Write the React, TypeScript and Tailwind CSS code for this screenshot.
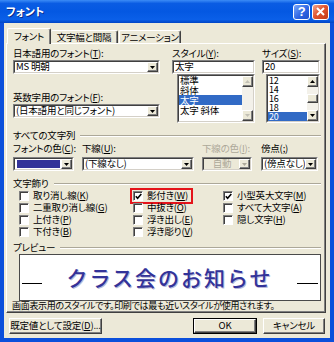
import React from 'react';

const sunken = 'border border-t-[#808080] border-l-[#808080] border-b-white border-r-white';
const sunkenInner = 'border border-t-[#404040] border-l-[#404040] border-b-[#d4d0c8] border-r-[#d4d0c8]';
const raised = 'border border-t-white border-l-white border-b-[#404040] border-r-[#404040] shadow-[inset_-1px_-1px_0_#808080]';

const Tri = ({ up = false, color = '#000' }: { up?: boolean; color?: string }) => (
  <svg width="5" height="3" viewBox="0 0 5 3">
    <path d={up ? 'M0 3h5L2.5 0z' : 'M0 0h5L2.5 3z'} fill={color} />
  </svg>
);

const DropBtn = ({ disabled }: { disabled?: boolean }) => (
  <div className={`w-[11px] h-full shrink-0 flex items-center justify-center bg-[#ECE9D8] ${raised}`}>
    <Tri color={disabled ? '#aca899' : '#000'} />
  </div>
);

const Combo: React.FC<{ className?: string; disabled?: boolean; children?: React.ReactNode }> = ({ className = '', disabled, children }) => (
  <div className={`h-[14px] ${sunken} ${className}`}>
    <div className={`h-full flex ${sunkenInner} ${disabled ? 'bg-[#ECE9D8]' : 'bg-white'}`}>
      <div className="flex-1 min-w-0 flex items-center pl-[1px] leading-none overflow-hidden whitespace-nowrap">{children}</div>
      <DropBtn disabled={disabled} />
    </div>
  </div>
);

const TextBox: React.FC<{ children?: React.ReactNode }> = ({ children }) => (
  <div className={`h-[14px] ${sunken}`}>
    <div className={`h-full flex items-center pl-[1px] leading-none bg-white ${sunkenInner}`}>{children}</div>
  </div>
);

const ArrowBtn = ({ up, disabled }: { up?: boolean; disabled?: boolean }) => (
  <div className={`h-[11px] shrink-0 flex items-center justify-center bg-[#ECE9D8] ${raised}`}>
    <Tri up={up} color={disabled ? '#c2c0b5' : '#000'} />
  </div>
);

const ScrollBar = ({ enabled }: { enabled?: boolean }) => (
  <div className="w-[11px] shrink-0 flex flex-col bg-[#f3f1ea]">
    <ArrowBtn up disabled={!enabled} />
    <div className="flex-1 flex flex-col justify-center">
      {enabled && <div className={`h-[9px] bg-[#ECE9D8] ${raised}`} />}
    </div>
    <ArrowBtn disabled={!enabled} />
  </div>
);

const ListBox: React.FC<{ className?: string; items: string[]; selected: string; enabled?: boolean; itemClass: string; first?: string }> = ({
  className = '',
  items,
  selected,
  enabled,
  itemClass,
  first = '',
}) => (
  <div className={`h-[49px] ${sunken} ${className}`}>
    <div className={`h-full flex bg-white ${sunkenInner}`}>
      <div className={`flex-1 min-w-0 flex flex-col overflow-hidden ${first}`}>
        {items.map((it) => (
          <div
            key={it}
            className={`${itemClass} shrink-0 pl-[1px] whitespace-nowrap ${it === selected ? 'bg-[#316ac5] text-white' : ''}`}
          >
            {it}
          </div>
        ))}
      </div>
      <ScrollBar enabled={enabled} />
    </div>
  </div>
);

const Label: React.FC<{ children: React.ReactNode; className?: string }> = ({ children, className = '' }) => (
  <div className={`h-[13px] leading-[13px] whitespace-nowrap ${className}`}>{children}</div>
);

const GroupHeader: React.FC<{ label: string; className?: string }> = ({ label, className = '' }) => (
  <div className={`flex items-center h-[13px] ${className}`}>
    <span className="leading-[13px] whitespace-nowrap">{label}</span>
    <div className="flex-1 ml-[5px] border-t border-t-[#aca899] border-b border-b-white" />
  </div>
);

const Check = ({ checked }: { checked?: boolean }) => (
  <div className="w-[10px] h-[10px] shrink-0 bg-white flex items-center justify-center border border-t-[#808080] border-l-[#808080] border-r-white border-b-white shadow-[inset_1px_1px_0_#404040]">
    {checked && (
      <svg width="7" height="7" viewBox="0 0 7 7" className="ml-px mt-px">
        <path d="M0.8 3.2 L2.6 5.2 L6.3 1" fill="none" stroke="#000" strokeWidth="1.6" />
      </svg>
    )}
  </div>
);

const CheckItem: React.FC<{ checked?: boolean; children: React.ReactNode; marked?: boolean }> = ({ checked, children, marked }) => (
  <div className="h-[12px] flex items-center">
    <div className={`flex items-center ${marked ? 'outline-2 outline-[#e4141b] outline-offset-[1px] pr-[2px]' : ''}`}>
      <Check checked={checked} />
      <span className="ml-[4px] leading-none whitespace-nowrap">{children}</span>
    </div>
  </div>
);

const Btn: React.FC<{ className?: string; def?: boolean; children: React.ReactNode }> = ({ className = '', def, children }) => (
  <div className={`h-[16px] bg-[#ECE9D8] ${def ? 'border border-black' : ''} ${className}`}>
    <div className={`w-full h-full flex items-center justify-center leading-none whitespace-nowrap ${raised}`}>{children}</div>
  </div>
);

export default function App() {
  return (
    <div className="w-[334px] h-[342px] flex flex-col bg-[#0b4fdb] text-[9.5px] tracking-[-0.2px] text-black font-['Noto_Sans_CJK_JP',sans-serif] [font-feature-settings:'palt']">
      {/* title bar */}
      <div className="h-[23px] shrink-0 flex items-center pl-[6px] pr-[5px] bg-[linear-gradient(180deg,#3c8cf6_0%,#0a5ce3_15%,#0458e2_50%,#0a5fe8_85%,#0045c4_100%)]">
        <span className="text-white font-bold text-[11px] tracking-normal [text-shadow:1px_1px_0_#0a2a8a]">フォント</span>
        <div className="ml-auto flex gap-[2px]">
          <div className="w-[17px] h-[16px] rounded-[3px] border border-white flex items-center justify-center bg-[linear-gradient(135deg,#7aa8fa_0%,#2f66e4_55%,#1f4fcc_100%)]">
            <span className="text-white font-bold text-[13px] leading-none font-['Liberation_Sans',sans-serif]">?</span>
          </div>
          <div className="w-[17px] h-[16px] rounded-[3px] border border-white flex items-center justify-center bg-[linear-gradient(135deg,#f2a78f_0%,#e25530_45%,#c13a17_100%)]">
            <svg width="9" height="9" viewBox="0 0 9 9">
              <path d="M1 1L8 8M8 1L1 8" stroke="#fff" strokeWidth="2" />
            </svg>
          </div>
        </div>
      </div>

      {/* body */}
      <div className="flex-1 mx-[4px] mb-[4px] bg-[#ECE9D8] flex flex-col">
        {/* tabs */}
        <div className="flex items-end mt-[5px] pl-[3px] whitespace-nowrap">
          <div className="relative z-10 -mb-px h-[16px] w-[44px] bg-[#ECE9D8] flex items-center justify-center border-l border-t border-l-white border-t-white border-r border-r-[#404040] rounded-t-[2px] shadow-[inset_-1px_0_0_#808080]">
            フォント
          </div>
          <div className="h-[13px] w-[67px] flex items-center justify-center border-t border-t-white border-r border-r-[#404040] rounded-t-[2px] shadow-[inset_-1px_0_0_#808080]">
            文字幅と間隔
          </div>
          <div className="h-[13px] w-[62px] ml-px flex items-center justify-center border-l border-t border-l-white border-t-white border-r border-r-[#404040] rounded-t-[2px] shadow-[inset_-1px_0_0_#808080]">
            アニメーション
          </div>
        </div>

        {/* panel */}
        <div className={`ml-[2px] w-[320px] h-[270px] shrink-0 flex flex-col pl-[6px] pr-[4px] ${raised}`}>
          {/* fonts */}
          <div className="flex pt-[3px]">
            <div className="w-[147px] flex flex-col">
              <Label>日本語用のフォント(<u>T</u>):</Label>
              <Combo>MS 明朝</Combo>
              <Label className="mt-[17px]">英数字用のフォント(<u>F</u>):</Label>
              <Combo>(日本語用と同じフォント)</Combo>
            </div>
            <div className="ml-[12px] w-[83px] flex flex-col">
              <Label>スタイル(<u>Y</u>):</Label>
              <TextBox>太字</TextBox>
              <ListBox
                className="ml-[5px]"
                items={['標準', '斜体', '太字', '太字 斜体']}
                selected="太字"
                itemClass="h-[10px] leading-[10px]"
                first="-mt-px"
              />
            </div>
            <div className="ml-[7px] w-[58px] flex flex-col">
              <Label>サイズ(<u>S</u>):</Label>
              <TextBox>20</TextBox>
              <ListBox
                className="ml-[4px]"
                items={['12', '14', '16', '18', '20']}
                selected="20"
                enabled
                itemClass="h-[9px] leading-[9px] text-[9px] last:grow"
              />
            </div>
          </div>

          {/* all text */}
          <GroupHeader label="すべての文字列" className="mt-[6px]" />
          <div className="flex">
            <div className="w-[61px] flex flex-col">
              <Label>フォントの色(<u>C</u>):</Label>
              <Combo className="mt-[2px]">
                <div className="flex-1 h-[8px] mx-[1px] bg-[#333399]" />
              </Combo>
            </div>
            <div className="ml-[8px] w-[112px] flex flex-col">
              <Label>下線(<u>U</u>):</Label>
              <Combo className="mt-[2px]">(下線なし)</Combo>
            </div>
            <div className="ml-[8px] w-[50px] flex flex-col">
              <Label className="text-[#aca899]">下線の色(<u>I</u>):</Label>
              <Combo className="mt-[2px]" disabled>
                <span className="flex-1 text-center text-[#aca899]">自動</span>
              </Combo>
            </div>
            <div className="ml-[9px] w-[57px] flex flex-col">
              <Label>傍点(<u>;</u>)</Label>
              <Combo className="mt-[2px]">(傍点なし)</Combo>
            </div>
          </div>

          {/* effects */}
          <GroupHeader label="文字飾り" className="mt-[6px]" />
          <div className="grid grid-cols-[114px_90px_1fr] pl-[6px]">
            <CheckItem>取り消し線(<u>K</u>)</CheckItem>
            <CheckItem checked marked>影付き(<u>W</u>)</CheckItem>
            <CheckItem checked>小型英大文字(<u>M</u>)</CheckItem>
            <CheckItem>二重取り消し線(<u>G</u>)</CheckItem>
            <CheckItem>中抜き(<u>O</u>)</CheckItem>
            <CheckItem>すべて大文字(<u>A</u>)</CheckItem>
            <CheckItem>上付き(<u>P</u>)</CheckItem>
            <CheckItem>浮き出し(<u>E</u>)</CheckItem>
            <CheckItem>隠し文字(<u>H</u>)</CheckItem>
            <CheckItem>下付き(<u>B</u>)</CheckItem>
            <CheckItem>浮き彫り(<u>V</u>)</CheckItem>
            <div />
          </div>

          {/* preview */}
          <GroupHeader label="プレビュー" className="mt-[3px]" />
          <div className="ml-[6px] w-[302px] h-[47px] shrink-0 bg-white border border-[#4a4a4a] flex items-center px-[2px]">
            <div className="w-[20px] h-px bg-black mt-[12px]" />
            <div className="flex-1 text-center text-[21px] leading-none tracking-[2px] font-medium text-[#333399] [font-feature-settings:normal] [text-shadow:1px_1px_0_#b8b8d8]">
              クラス会のお知らせ
            </div>
            <div className="w-[21px] h-px bg-black mt-[12px]" />
          </div>
          <div className="h-[10px] leading-[10px] whitespace-nowrap text-[9px] tracking-[-0.3px] -ml-px">
            画面表示用のスタイルです。印刷では最も近いスタイルが使用されます。
          </div>
        </div>

        {/* buttons */}
        <div className="flex mt-[5px] pl-[5px] pr-[5px]">
          <Btn className="w-[93px]">既定値として設定(<u>D</u>)...</Btn>
          <Btn className="w-[64px] ml-auto" def>
            OK
          </Btn>
          <Btn className="w-[62px] ml-[6px]">キャンセル</Btn>
        </div>
      </div>
    </div>
  );
}
